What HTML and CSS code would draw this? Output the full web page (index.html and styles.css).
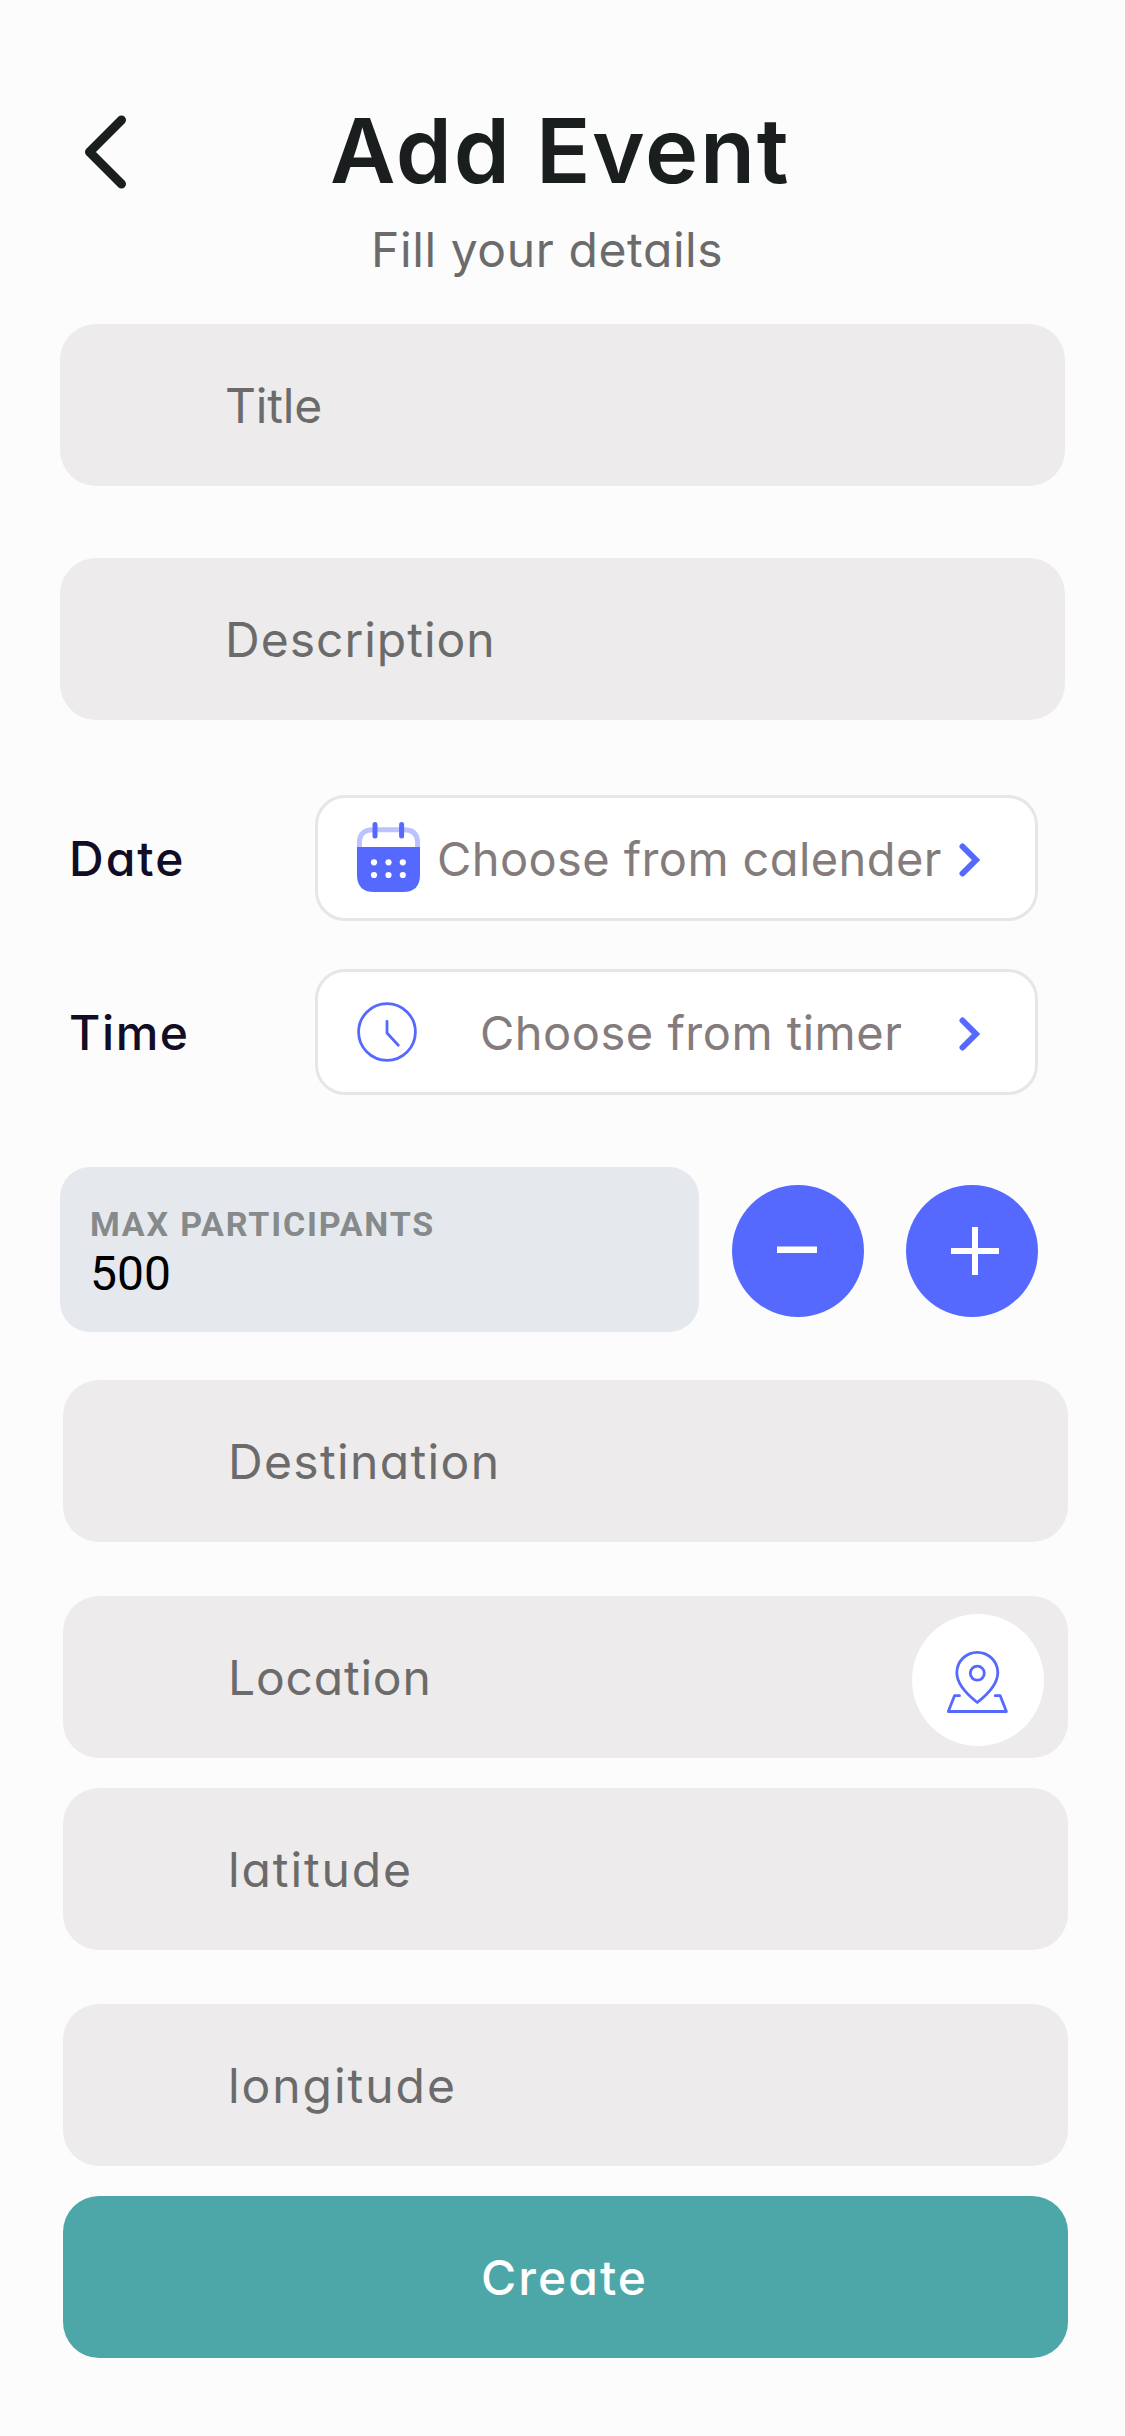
FILE: index.html
```html
<!DOCTYPE html>
<html lang="en">
<head>
<meta charset="utf-8">
<title>Add Event</title>
<link rel="stylesheet" href="styles.css">
</head>
<body>
<main class="screen">
  <header class="header">
    <svg class="back" viewBox="0 0 48 80" fill="none" stroke="#1a1e1e" stroke-width="9" stroke-linecap="round" stroke-linejoin="round"><path d="M41.5 8 9.500 40l32 32"/></svg>
    <h1 class="heading">Add Event</h1>
  </header>
  <p class="subtitle">Fill your details</p>

  <div class="group upper">
    <div class="field"><span class="t-title">Title</span></div>
    <div class="field"><span class="t-description">Description</span></div>
  </div>

  <div class="pickers">
    <div class="picker-row">
      <span class="label t-date">Date</span>
      <div class="picker">
        <svg class="calendar" viewBox="0 0 63 70" fill="none">
          <path d="M2.4 26V21Q2.4 7.8 16 7.8H47Q60.6 7.8 60.6 21V26" stroke="#bbc3ff" stroke-width="5"/>
          <path d="M0 25H63V53Q63 70 46 70H17Q0 70 0 53Z" fill="#5669ff"/>
          <path d="M18 2.500V14M44.600 2.500V14" stroke="#5669ff" stroke-width="5" stroke-linecap="round"/>
          <g fill="#fff"><circle cx="17" cy="40.3" r="3.1"/><circle cx="31.5" cy="40.3" r="3.1"/><circle cx="45.8" cy="40.3" r="3.1"/><circle cx="17" cy="53" r="3.1"/><circle cx="31.5" cy="53" r="3.1"/><circle cx="45.8" cy="53" r="3.1"/></g>
        </svg>
        <span class="choice t-calendar">Choose from calender</span>
        <svg class="chevron" viewBox="0 0 22 34" fill="none" stroke="#5669ff" stroke-width="6"><path d="M3.5 3.5 17 17 3.5 30.5" stroke-linecap="round"/></svg>
      </div>
    </div>
    <div class="picker-row">
      <span class="label t-time">Time</span>
      <div class="picker">
        <svg class="clock" viewBox="0 0 60 60" fill="none" stroke="#5669ff" stroke-width="2.8" stroke-linecap="round" stroke-linejoin="round"><circle cx="30" cy="30" r="28.4"/><path d="M30 19.5V31L41.3 43.3"/></svg>
        <span class="choice t-timer">Choose from timer</span>
        <svg class="chevron" viewBox="0 0 22 34" fill="none" stroke="#5669ff" stroke-width="6"><path d="M3.5 3.5 17 17 3.5 30.5" stroke-linecap="round"/></svg>
      </div>
    </div>
  </div>

  <div class="participants">
    <div class="counter">
      <span class="counter-label">MAX PARTICIPANTS</span>
      <span class="counter-value">500</span>
    </div>
    <svg class="round" viewBox="0 0 132 132"><circle cx="66" cy="66" r="66" fill="#5669ff"/><path d="M45 61.6H85V68H45Z" fill="#fff"/></svg>
    <svg class="round plus" viewBox="0 0 132 132"><circle cx="66" cy="66" r="66" fill="#5669ff"/><path d="M45 66H93M69 42V90" stroke="#fff" stroke-width="6"/></svg>
  </div>

  <div class="group lower">
    <div class="field"><span class="t-destination">Destination</span></div>
    <div class="field location">
      <span class="t-location">Location</span>
      <svg class="pin" viewBox="0 0 132 132" fill="none"><circle cx="66" cy="66" r="66" fill="#fff"/><g stroke="#5669ff" stroke-width="2.8" stroke-linecap="round" stroke-linejoin="round"><path d="M65.3 88.500C57 82 44.800 70.500 44.800 58.800A20.500 20.500 0 0 1 85.800 58.800C85.800 70.500 73.600 82 65.300 88.500Z"/><circle cx="65.3" cy="59.2" r="7"/><path d="M47.500 81.700H42.500L36.300 97.500H94.400L88.200 81.700H83.200"/></g></svg>
    </div>
    <div class="field close"><span class="t-latitude">latitude</span></div>
    <div class="field"><span class="t-longitude">longitude</span></div>
    <div class="create"><span class="t-create">Create</span></div>
  </div>
</main>
</body>
</html>
```
FILE: styles.css
```css
* { box-sizing: border-box; }

body {
  margin: 0;
  background: #fcfcfc;
  font-family: Inter, "Open Sans", sans-serif;
  font-feature-settings: "cv11";
  font-size: 48px;
}

svg { display: block; flex: none; }
span { white-space: nowrap; }

.screen {
  width: 1125px;
  height: 2436px;
  padding-top: 96px;
  overflow: hidden;
}

.header {
  display: flex;
  align-items: center;
  height: 111px;
  padding-left: 80px;
}

.back { width: 48px; height: 80px; }

.heading {
  margin: 0 0 2px 202px;
  font-size: 90px;
  line-height: 110px;
  font-weight: 600;
  letter-spacing: 1.7px;
  color: #1a1e1e;
}

.subtitle {
  margin: 7px 0 0 371px;
  height: 73px;
  line-height: 72px;
  letter-spacing: 0.6px;
  color: #6b6b6b;
}

.group { display: flex; flex-direction: column; }
.upper { gap: 72px; margin: 37px 0 0 60px; }
.lower { gap: 54px; margin: 48px 0 0 63px; }

.field, .create {
  display: flex;
  align-items: center;
  width: 1005px;
  height: 162px;
  border-radius: 36px;
}

.field {
  padding-left: 165px;
  background: #edebeb;
  color: #6b6b6b;
}

.location { justify-content: space-between; padding-right: 24px; }
.pin { width: 132px; height: 132px; margin-top: 6px; }
.close { margin-top: -24px; }

.create {
  margin-top: -24px;
  padding-left: 418px;
  background: #4da6a8;
  color: #fff;
  font-weight: 500;
}

/* Per-label tracking */
.t-title { letter-spacing: -0.2px; }
.t-description { letter-spacing: 1px; }
.t-date { letter-spacing: 2px; }
.t-time { letter-spacing: 1.6px; }
.t-calendar { letter-spacing: 0.4px; }
.t-destination { letter-spacing: 1.35px; }
.t-location { letter-spacing: 0.8px; }
.t-latitude { letter-spacing: 1.9px; }
.t-longitude { letter-spacing: 1.95px; }
.t-create { letter-spacing: 2.05px; }

.pickers {
  display: flex;
  flex-direction: column;
  gap: 48px;
  margin: 75px 0 0 69px;
}

.picker-row { display: flex; align-items: center; }

.label {
  width: 246px;
  font-weight: 500;
  color: #120d26;
}

.picker {
  display: flex;
  align-items: center;
  width: 723px;
  height: 126px;
  padding-left: 39px;
  border: 3px solid #e6e6e6;
  border-radius: 30px;
  background: #fff;
  font-size: 47px;
  color: #847c7c;
}

.calendar { width: 63px; height: 70px; margin-bottom: 2px; }
.clock { width: 60px; height: 60px; }
.choice { width: 520px; padding-left: 17px; }
.t-timer { width: 523px; padding-left: 63px; letter-spacing: 0.5px; }
.chevron { width: 22px; height: 34px; margin: 3px 0 0 19px; }

.participants {
  display: flex;
  align-items: flex-start;
  margin: 72px 0 0 60px;
}

.counter {
  display: flex;
  flex-direction: column;
  width: 639px;
  height: 165px;
  padding: 36px 0 0 30px;
  border-radius: 30px;
  background: #e5e9ee;
  font-family: Roboto, sans-serif;
}

.counter-label {
  font-size: 34px;
  line-height: 42px;
  font-weight: 700;
  letter-spacing: 1.8px;
  color: #868a8a;
}

.counter-value { font-size: 48px; line-height: 58px; color: #000; }

.round { width: 132px; height: 132px; margin: 18px 0 0 33px; }
.plus { margin-left: 42px; }
```
